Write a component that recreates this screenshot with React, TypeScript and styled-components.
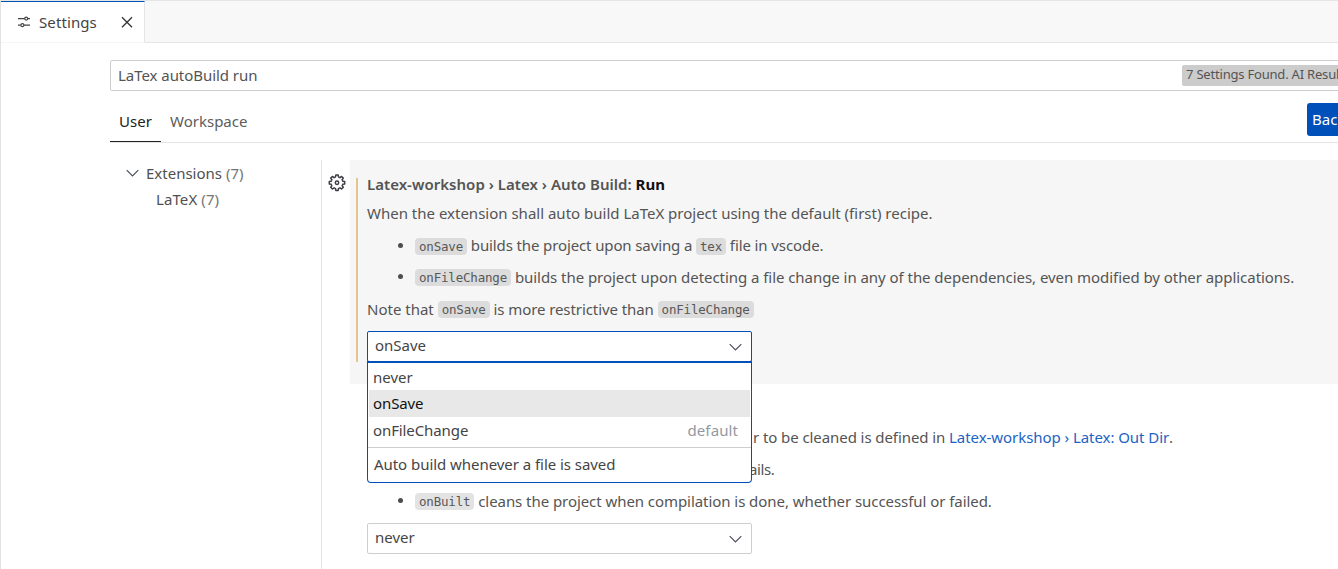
import React from "react";
import styled, { createGlobalStyle } from "styled-components";

const Global = createGlobalStyle`
  * { box-sizing: border-box; }
  html, body { margin: 0; padding: 0; overflow: hidden; background: #fff; }
`;

const Window = styled.div`
  width: 1338px;
  height: 569px;
  overflow: hidden;
  display: flex;
  flex-direction: column;
  border-left: 1px solid #e2e2e2;
  background: #fff;
  color: #545454;
  font-family: "Noto Sans", "Open Sans", sans-serif;
  font-size: 15px;
  white-space: nowrap;
`;

const T = styled.span<{ $s?: number }>`
  letter-spacing: ${(p) => p.$s ?? 0}px;
`;

const TabBar = styled.div`
  display: flex;
  height: 43px;
  flex: none;
  background: #f8f8f8;
  border-top: 1px solid #e5e5e5;
  border-bottom: 1px solid #e5e5e5;
`;

const EditorTab = styled.div`
  display: flex;
  align-items: center;
  width: 144px;
  height: 42px;
  padding: 0 10px 0 16px;
  background: #fff;
  border-top: 1px solid #0054b9;
  border-right: 1px solid #e5e5e5;
  border-bottom: 1px solid #f5f5f5;
  color: #444;
  svg { flex: none; }
`;

const TabLabel = styled.div`
  flex: 1;
  padding-left: 7px;
  line-height: 22px;
`;

const Header = styled.div`
  display: flex;
  flex-direction: column;
  flex: none;
  width: 1300px;
  height: 100px;
  margin-left: 109px;
  padding-top: 17px;
  border-bottom: 1px solid #e5e5e5;
`;

const SearchBox = styled.div`
  display: flex;
  align-items: center;
  flex: none;
  height: 31px;
  padding-left: 7px;
  border: 1px solid #cecece;
  border-radius: 2px;
`;

const SearchText = styled.div`
  width: 1064px;
  line-height: 29px;
`;

const CountBadge = styled.div`
  height: 21px;
  padding: 0 4px;
  background: #ccc;
  border-radius: 2px;
  font-size: 13px;
  line-height: 19px;
  flex: 1;
`;

const ScopeRow = styled.div`
  display: flex;
  align-items: flex-end;
  height: 51px;
  flex: none;
`;

const Scope = styled.div<{ $active?: boolean }>`
  height: 41px;
  padding: 0 9px;
  line-height: 40px;
  color: ${(p) => (p.$active ? "#222" : "#5c5c5c")};
  border-bottom: 1px solid ${(p) => (p.$active ? "#222" : "transparent")};
`;

const BackupButton = styled.div`
  align-self: flex-start;
  margin: 12px 0 0 auto;
  width: 103px;
  height: 33px;
  padding-left: 5px;
  border-radius: 3px;
  background: #0050b9;
  color: #fff;
  line-height: 32px;
`;

const Body = styled.div`
  display: flex;
  flex: 1;
  min-height: 0;
  padding-top: 17px;
`;

const Tree = styled.div`
  width: 321px;
  flex: none;
  border-right: 1px solid #e5e5e5;
  color: #505050;
`;

const TreeRow = styled.div<{ $indent: number }>`
  display: flex;
  align-items: center;
  gap: 7px;
  height: 26px;
  padding-left: ${(p) => p.$indent}px;
  small { font-size: 15px; color: #757575; }
`;

const List = styled.div`
  display: flex;
  flex-direction: column;
  width: 1016px;
  flex: none;
`;

const Setting = styled.div`
  display: flex;
  height: 224px;
`;

const Gutter = styled.div`
  width: 28px;
  flex: none;
  padding: 14px 0 0 6px;
`;

const Content = styled.div<{ $focus?: boolean }>`
  display: flex;
  flex: 1;
  padding: 18px 0 22px 6px;
  background: ${(p) => (p.$focus ? "#f6f6f6" : "#fff")};
`;

const Marker = styled.div<{ $on?: boolean }>`
  width: 2px;
  flex: none;
  margin-right: 9px;
  background: ${(p) => (p.$on ? "#e2c58f" : "transparent")};
`;

const Fields = styled.div`
  display: flex;
  flex-direction: column;
`;

const Title = styled.div`
  height: 19px;
  flex: none;
  line-height: 13px;
  font-weight: 600;
  b { color: #111; font-weight: 700; }
`;

const Line = styled.div<{ $h?: number; $indent?: number }>`
  display: flex;
  align-items: center;
  flex: none;
  height: ${(p) => p.$h ?? 32}px;
  padding-left: ${(p) => p.$indent ?? 0}px;
  white-space: pre;
`;

const Bullet = styled(Line)`
  padding-left: 31px;
  &::before {
    content: "";
    width: 5px;
    height: 5px;
    margin-right: 12px;
    border-radius: 50%;
    background: #4d4d4d;
  }
`;

const Code = styled.code<{ $light?: boolean }>`
  height: 17px;
  margin-top: 2px;
  padding: 0 4px;
  border-radius: 4px;
  background: ${(p) => (p.$light ? "#e3e3e3" : "#dcdcdc")};
  color: #585858;
  font-family: "DejaVu Sans Mono", monospace;
  font-size: 12.5px;
  letter-spacing: -0.19px;
  line-height: 17px;
`;

const Link = styled.span`
  color: #1d63c4;
  letter-spacing: -0.06px;
`;

const SelectBox = styled.div<{ $open?: boolean }>`
  position: relative;
  display: flex;
  align-items: center;
  justify-content: space-between;
  width: 385px;
  height: 31px;
  flex: none;
  margin-top: ${(p) => (p.$open ? 6 : 7)}px;
  padding: 0 9px 0 7px;
  border: 1px solid ${(p) => (p.$open ? "#0050b9" : "#cecece")};
  border-radius: 2px;
  background: #fff;
  color: #454545;
`;

const Value = styled(T)`
  padding-bottom: 3px;
`;

const Menu = styled.div`
  position: absolute;
  z-index: 2;
  top: 29px;
  left: -1px;
  width: 385px;
  height: 122px;
  padding-top: 1px;
  border: 1px solid #0050b9;
  border-top-width: 2px;
  border-radius: 0 0 4px 4px;
  background: #fff;
`;

const Option = styled.div<{ $active?: boolean }>`
  display: flex;
  justify-content: space-between;
  height: ${(p) => (p.$active ? 27 : 26)}px;
  margin: 0 1px;
  padding: 0 12px 0 4px;
  line-height: 26px;
  background: ${(p) => (p.$active ? "#e8e8e8" : "#fff")};
  color: ${(p) => (p.$active ? "#111" : "#444")};
  em { font-style: normal; letter-spacing: 0.1px; color: #9299a3; }
`;

const Detail = styled.div`
  margin-top: 4px;
  padding-left: 6px;
  border-top: 1px solid #cecece;
  line-height: 33px;
`;

const Chevron = () => (
  <svg width="13" height="8" viewBox="0 0 13 8" fill="none" stroke="#4a5058" strokeWidth="1.2">
    <path d="M.7 1.2 6.5 7l5.8-5.8" />
  </svg>
);

const SlidersIcon = () => (
  <svg width="15" height="14" viewBox="0 0 15 14" fill="none" stroke="#444" strokeWidth="1.2">
    <path d="M1 3.6h6.6M10.8 3.6H13M1 10.2h2.8M7 10.2h6" />
    <circle cx="9.2" cy="3.6" r="1.5" />
    <circle cx="5.4" cy="10.2" r="1.5" />
  </svg>
);

const CloseIcon = () => (
  <svg width="14" height="14" viewBox="0 0 14 14" fill="none" stroke="#333" strokeWidth="1.3">
    <path d="M2 2.2l10 10M12 2.2 2 12.2" />
  </svg>
);

const GearIcon = () => (
  <svg width="18" height="18" viewBox="0 0 18 18" fill="none" stroke="#3d3d46" strokeWidth="1.5" strokeLinejoin="round">
    {Array.from({ length: 8 }, (_, i) => (
      <path
        key={i}
        transform={`rotate(${i * 45} 9 8.7)`}
        d="M6.6 3 7.5 3 7.8 1h2.4l.3 2 .9 0"
      />
    ))}
    <circle cx="9" cy="8.7" r="1.7" />
  </svg>
);

export default function App() {
  return (
    <Window>
      <Global />
      <TabBar>
        <EditorTab>
          <SlidersIcon />
          <TabLabel><T $s={0.1}>Settings</T></TabLabel>
          <CloseIcon />
        </EditorTab>
      </TabBar>
      <Header>
        <SearchBox>
          <SearchText><T $s={-0.05}>LaTex autoBuild run</T></SearchText>
          <CountBadge><T $s={-0.2}>7 Settings Found. AI Results</T></CountBadge>
        </SearchBox>
        <ScopeRow>
          <Scope $active><T $s={0.05}>User</T></Scope>
          <Scope><T>Workspace</T></Scope>
          <BackupButton>Backup and Sync</BackupButton>
        </ScopeRow>
      </Header>
      <Body>
        <Tree>
          <TreeRow $indent={125}>
            <Chevron />
            <T>Extensions <small>(7)</small></T>
          </TreeRow>
          <TreeRow $indent={155}><T $s={0.1}>LaTeX <small>(7)</small></T></TreeRow>
        </Tree>
        <List>
          <Setting>
            <Gutter><GearIcon /></Gutter>
            <Content $focus>
              <Marker $on />
              <Fields>
                <Title><T $s={0.03}>Latex-workshop › Latex › Auto Build: <b>Run</b></T></Title>
                <Line><T>When the extension shall auto build LaTeX project using the default (first) recipe.</T></Line>
                <Bullet><Code>onSave</Code><T $s={-0.12}> builds the project upon saving a </T><Code>tex</Code><T $s={-0.1}> file in vscode.</T></Bullet>
                <Bullet $h={31}><Code>onFileChange</Code><T $s={-0.05}> builds the project upon detecting a file change in any of the dependencies, even modified by other applications.</T></Bullet>
                <Line $h={33}><T>Note that </T><Code>onSave</Code><T $s={-0.08}> is more restrictive than </T><Code>onFileChange</Code></Line>
                <SelectBox $open>
                  <Value>onSave</Value>
                  <Chevron />
                  <Menu>
                    <Option><T>never</T></Option>
                    <Option $active><T $s={-0.1}>onSave</T></Option>
                    <Option><T $s={-0.1}>onFileChange</T><em>default</em></Option>
                    <Detail><T $s={-0.05}>Auto build whenever a file is saved</T></Detail>
                  </Menu>
                </SelectBox>
              </Fields>
            </Content>
          </Setting>
          <Setting>
            <Gutter />
            <Content>
              <Marker />
              <Fields>
                <Title />
                <Line $indent={386}><T $s={-0.08}>r to be cleaned is defined in <Link>Latex-workshop › Latex: Out Dir</Link>.</T></Line>
                <Line $indent={382}><T $s={-0.4}>ails.</T></Line>
                <Bullet $h={31}><Code $light>onBuilt</Code><T $s={-0.06}> cleans the project when compilation is done, whether successful or failed.</T></Bullet>
                <SelectBox><Value>never</Value><Chevron /></SelectBox>
              </Fields>
            </Content>
          </Setting>
        </List>
      </Body>
    </Window>
  );
}
